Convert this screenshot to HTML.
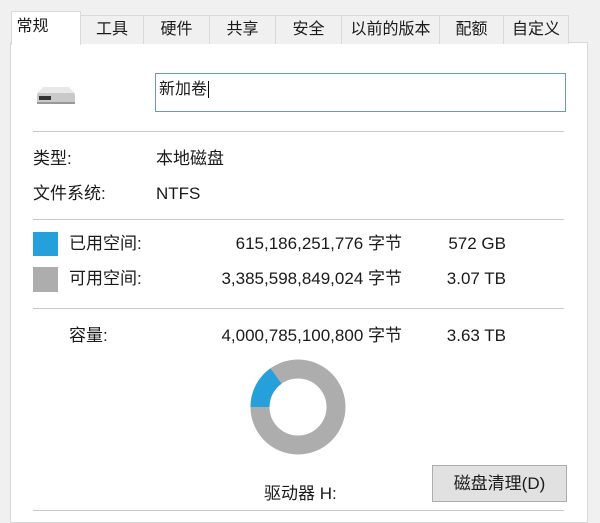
<!DOCTYPE html><html><head><meta charset="utf-8"><style>
body{margin:0;width:600px;height:521px;background:#f0f0f0;font-family:"Liberation Sans","Noto Sans CJK SC",sans-serif;font-size:17px;line-height:20px;color:#1a1a1a;position:relative;overflow:hidden}
.a{position:absolute;white-space:nowrap}
.tab{position:absolute;top:15px;height:28px;border:1px solid #d9d9d9;border-bottom:none;background:#f0f0f0;line-height:28px;text-align:center;font-size:16px}
.ln{position:absolute;left:33px;width:531px;height:1px;background:#c8c8c8}
.r{text-align:right}
</style></head><body>
<div class="a" style="left:10px;top:42px;width:576px;height:479px;background:#fff;border:1px solid #d9d9d9"></div>
<div class="tab" style="left:11px;top:11px;height:33px;width:68px;background:#fff;line-height:30px;text-align:left">&nbsp;常规</div>
<div class="tab" style="left:80px;width:62px">工具</div>
<div class="tab" style="left:143px;width:65px">硬件</div>
<div class="tab" style="left:209px;width:65px">共享</div>
<div class="tab" style="left:275px;width:65px">安全</div>
<div class="tab" style="left:341px;width:97px">以前的版本</div>
<div class="tab" style="left:439px;width:63px">配额</div>
<div class="tab" style="left:503px;width:64px">自定义</div>
<svg class="a" style="left:33px;top:85px" width="46" height="22"><path d="M4 8 L10 2 H36 L42 8 Z" fill="#e8e8e8"/><rect x="4" y="8" width="38" height="10" rx="2" fill="#c9c9c9"/><rect x="6" y="11" width="12" height="4" fill="#333"/><rect x="4" y="17" width="38" height="2" fill="#999"/></svg>
<div class="a" style="left:155px;top:73px;width:409px;height:37px;border:1px solid #6a9bb0"></div>
<div class="a" style="left:159px;top:80px;font-size:16px">新加卷<span style="border-left:1px solid #000;margin-left:1px"></span></div>
<div class="ln" style="top:131px"></div>
<div class="a" style="left:33px;top:149px">类型:</div>
<div class="a" style="left:156px;top:149px">本地磁盘</div>
<div class="a" style="left:33px;top:184px">文件系统:</div>
<div class="a" style="left:156px;top:184px">NTFS</div>
<div class="ln" style="top:219px"></div>
<div class="a" style="left:33px;top:232px;width:25px;height:24px;background:#26a0da"></div>
<div class="a" style="left:33px;top:267px;width:25px;height:25px;background:#adadad"></div>
<div class="a" style="left:69px;top:234px">已用空间:</div>
<div class="a" style="left:69px;top:269px">可用空间:</div>
<div class="a r" style="right:198px;top:234px">615,186,251,776 字节</div>
<div class="a r" style="right:198px;top:269px">3,385,598,849,024 字节</div>
<div class="a r" style="right:94px;top:234px">572 GB</div>
<div class="a r" style="right:94px;top:269px">3.07 TB</div>
<div class="ln" style="top:308px"></div>
<div class="a" style="left:69px;top:326px">容量:</div>
<div class="a r" style="right:198px;top:326px">4,000,785,100,800 字节</div>
<div class="a r" style="right:94px;top:326px">3.63 TB</div>
<svg class="a" style="left:248px;top:357px" width="100" height="100"><circle cx="50" cy="50" r="38" fill="none" stroke="#adadad" stroke-width="19"/><path d="M12 50 A38 38 0 0 1 28 19" fill="none" stroke="#26a0da" stroke-width="19"/></svg>
<div class="a" style="left:264px;top:484px">驱动器 H:</div>
<div class="a" style="left:432px;top:465px;width:133px;height:35px;background:#e1e1e1;border:1px solid #adadad;text-align:center;line-height:35px">磁盘清理(D)</div>
<div class="ln" style="top:510px"></div>
</body></html>
